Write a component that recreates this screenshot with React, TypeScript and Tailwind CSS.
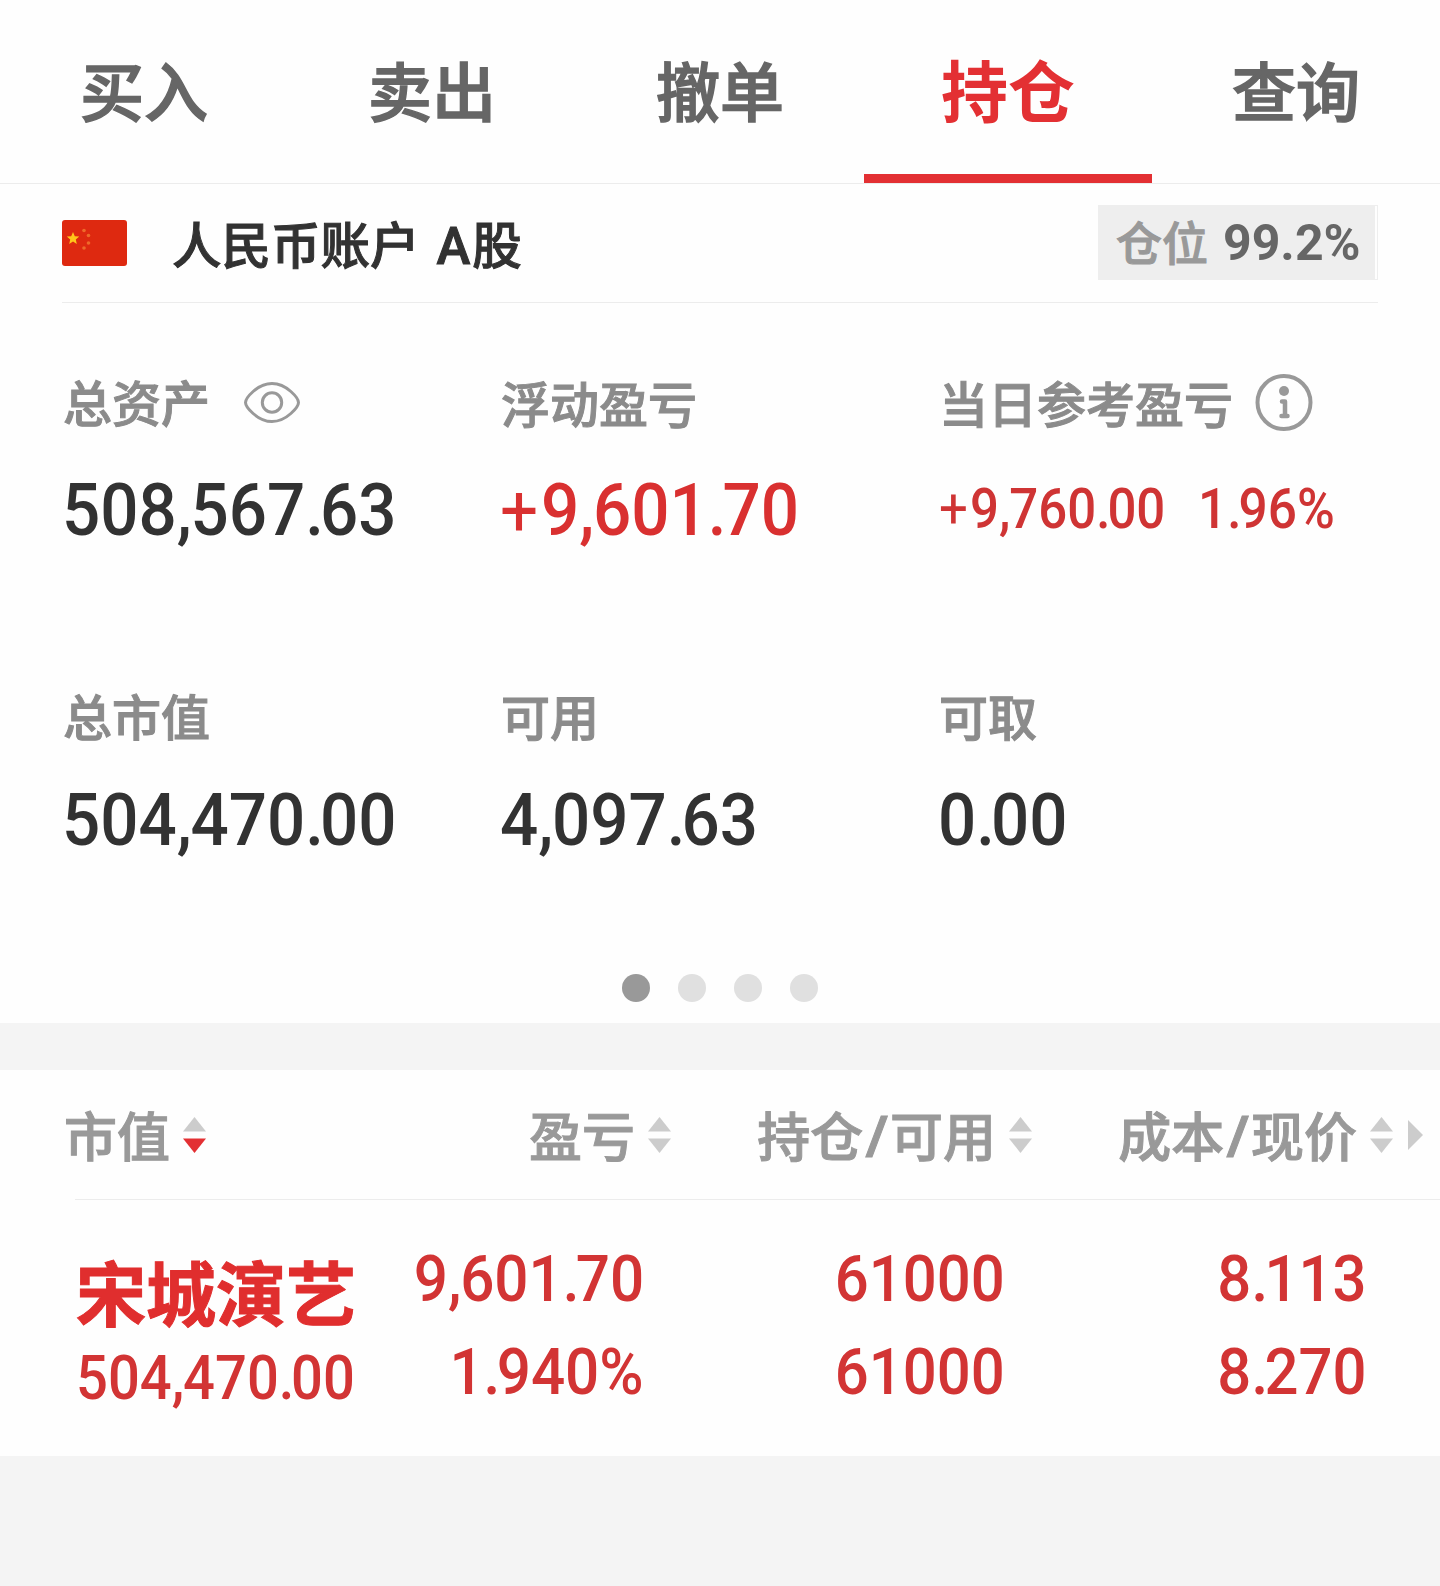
import React from 'react';
import clsx from 'clsx';

interface Column {
  label: string;
  sort?: 'desc';
  className: string;
}

const tabs = ['买入', '卖出', '撤单', '持仓', '查询'];

const columns: Column[] = [
  { label: '市值', sort: 'desc', className: 'w-[206px]' },
  { label: '盈亏', className: 'w-[465px]' },
  { label: '持仓/可用', className: 'w-[361px]' },
  { label: '成本/现价', className: 'w-[361px]' },
];

// Punctuation is set tighter than the digits around it
const markClasses: Record<string, string> = {
  '.': 'tracking-[-0.06em]',
  ',': 'tracking-[-0.02em]',
  '+': 'font-normal tracking-[0.04em]',
};

const Num: React.FC<{ value: string; className?: string }> = ({ value, className }) => (
  <span
    className={clsx(
      'block w-fit whitespace-nowrap font-[Roboto,sans-serif] font-medium [-webkit-text-stroke:0px]',
      className
    )}
  >
    {value.split(/([.,+])/).map((part, i) => (
      <span key={i} className={markClasses[part]}>{part}</span>
    ))}
  </span>
);

const Flag = () => (
  <svg width="66" height="48" viewBox="0 0 66 48">
    <rect x="0" y="1" width="65" height="46" rx="3" fill="#de2910" />
    <path d="M11 13l1.8 4.2 4.4.4-3.4 3 1 4.4-3.8-2.4-3.8 2.4 1-4.4-3.4-3 4.4-.4z" fill="#ffc61a" />
    <g fill="#ee6a2a">
      <circle cx="22" cy="11.5" r="1.8" />
      <circle cx="26.5" cy="16.5" r="1.8" />
      <circle cx="26.5" cy="24" r="1.8" />
      <circle cx="22" cy="29" r="1.8" />
    </g>
  </svg>
);

const EyeIcon = () => (
  <svg width="58" height="44" viewBox="0 0 58 44" fill="none" stroke="#999" strokeWidth="3">
    <path d="M2.5 22.5C2.5 18.5 14 3.500 29 3.500s26.5 15 26.5 19S44 41.500 29 41.500 2.500 26.500 2.500 22.500z" />
    <circle cx="29" cy="22.5" r="9.7" />
  </svg>
);

const InfoIcon = () => (
  <svg width="58" height="58" viewBox="0 0 58 58" fill="none" stroke="#999">
    <circle cx="29" cy="29.5" r="26.5" strokeWidth="4" />
    <circle cx="29" cy="18" r="5" fill="#999" stroke="none" />
    <path d="M27 28.5h3v14.5M26.5 43h6" strokeWidth="4.5" strokeLinecap="round" strokeLinejoin="round" />
  </svg>
);

const SortIcon: React.FC<{ sort?: 'desc' }> = ({ sort }) => (
  <svg width="23" height="36" viewBox="0 0 23 36">
    <path d="M11.5 0L23 14.5H0z" fill="#ccc" />
    <path d="M11.5 36L23 21.5H0z" fill={sort === 'desc' ? '#e33033' : '#ccc'} />
  </svg>
);

const ColumnLabel: React.FC<{ label: string }> = ({ label }) => {
  const [first, second] = label.split('/');
  return (
    <span className="pb-[2px] text-[53px] leading-[80px] whitespace-nowrap text-[#999]">
      {first}
      {second && (
        <>
          <span className="mx-[2px] font-['Open_Sans',sans-serif] text-[58px] leading-[1px] font-semibold [-webkit-text-stroke:1px]">/</span>
          {second}
        </>
      )}
    </span>
  );
};

const Stat: React.FC<{ label: string; value: string; red?: boolean; icon?: React.ReactNode; raised?: boolean }> = ({
  label,
  value,
  red,
  icon,
  raised,
}) => (
  <div>
    <div className="flex h-[60px] items-center text-[49px] leading-[60px] text-[#8b8b8b]">
      <span className={clsx('pl-px', icon && 'pb-[3px]')}>{label}</span>
      {icon}
    </div>
    <div className={clsx('h-[88px] text-[73px] leading-[88px]', raised ? 'mt-[31px]' : 'mt-[34px]')}>
      <Num
        value={value}
        className={clsx('origin-left', red ? 'scale-x-[0.923] text-[#d93030]' : 'scale-x-[0.922] text-[#323232]')}
      />
    </div>
  </div>
);

const App: React.FC = () => {
  return (
    <div className="h-[1586px] w-[1440px] overflow-hidden bg-[#f4f4f4] font-['Noto_Sans_CJK_SC',sans-serif] font-medium [-webkit-text-stroke:1px]">
      {/* Tabs */}
      <nav className="flex h-[184px] border-b border-[#ececec] bg-[#fefefe]">
        {tabs.map((tab) => (
          <div
            key={tab}
            className={clsx(
              'flex h-[183px] w-[288px] justify-center border-b-[9px] pt-[40px] leading-[96px]',
              tab === '持仓'
                ? 'border-[#e33033] text-[67px] font-bold text-[#e33033] [-webkit-text-stroke:0px]'
                : 'border-transparent text-[64px] text-[#666] [-webkit-text-stroke:1.5px]'
            )}
          >
            {tab}
          </div>
        ))}
      </nav>

      {/* Account summary */}
      <section className="h-[839px] bg-[#fefefe] px-[62px]">
        <div className="flex h-[119px] items-center border-b border-[#ececec] pb-px">
          <Flag />
          <span className="ml-[44px] text-[49.5px] leading-[72px] text-[#323232]">
            人民币账户<span className="mr-[2px] ml-[17px] font-[Roboto,sans-serif] text-[51px] leading-[1px] font-medium">A</span>股
          </span>
          <div className="mb-px ml-auto flex h-[75px] w-[280px] border border-[#eee] bg-[#fefefe] pr-[2px]">
            <div className="flex flex-1 items-center bg-[#eee] pl-[17px] text-[46px] leading-[72px] text-[#999]">
              <span className="pb-[4px]">仓位</span>
              <span className="ml-[15px] pt-[2px] font-[Roboto,sans-serif] text-[50px] font-bold text-[#666] [-webkit-text-stroke:0px]">
                99.2%
              </span>
            </div>
          </div>
        </div>

        <div className="grid h-[382px] grid-cols-[438px_438px_440px] pt-[69px]">
          <Stat
            label="总资产"
            value="508,567.63"
            icon={<span className="ml-[33px]"><EyeIcon /></span>}
          />
          <Stat label="浮动盈亏" value="+9,601.70" red />
          <div>
            <div className="flex h-[60px] items-center text-[49px] leading-[60px] text-[#8b8b8b]">
              <span className="pl-px">当日参考盈亏</span>
              <span className="ml-[22px]"><InfoIcon /></span>
            </div>
            <div className="mt-[33px] flex h-[88px] text-[55px] leading-[88px] text-[#cf3434]">
              <div className="w-[260px] pl-px"><Num value="+9,760.00" className="origin-left scale-x-[0.927]" /></div>
              <Num value="1.96%" className="origin-left scale-x-[0.935]" />
            </div>
          </div>
        </div>

        <div className="grid h-[239px] grid-cols-[438px_438px_440px]">
          <Stat label="总市值" value="504,470.00" raised />
          <Stat label="可用" value="4,097.63" raised />
          <Stat label="可取" value="0.00" raised />
        </div>

        <div className="mt-[50px] flex justify-center gap-7">
          <i className="size-7 rounded-full bg-[#999]" />
          <i className="size-7 rounded-full bg-[#e0e0e0]" />
          <i className="size-7 rounded-full bg-[#e0e0e0]" />
          <i className="size-7 rounded-full bg-[#e0e0e0]" />
        </div>
      </section>

      {/* Positions */}
      <section className="mt-[47px] h-[386px] bg-[#fefefe]">
        <div className="flex h-[129px] items-center">
          {columns.map((col) => (
            <div key={col.label} className={clsx('flex items-center justify-end gap-[13px]', col.className)}>
              <ColumnLabel label={col.label} />
              <SortIcon sort={col.sort} />
            </div>
          ))}
          <svg className="ml-[15px]" width="15" height="30" viewBox="0 0 15 30">
            <path d="M0 0L15 15L0 30z" fill="#ccc" />
          </svg>
        </div>
        <div className="ml-[75px] border-t border-[#ececec]" />
        <div className="flex pt-[33px] text-[64px] leading-[93px] text-[#d23434]">
          <div className="w-[360px] pl-[76px]">
            <div className="mt-[12px] h-[97px] text-[70px] leading-[92px] font-bold whitespace-nowrap text-[#e02e2e]">宋城演艺</div>
            <Num value="504,470.00" className="origin-left scale-x-[0.92] text-[61px] leading-[72px]" />
          </div>
          <div className="flex w-[284px] flex-col items-end">
            <Num value="9,601.70" className="origin-right scale-x-[0.94]" />
            <Num value="1.940%" className="origin-right scale-x-[0.94]" />
          </div>
          <div className="flex w-[361px] flex-col items-end">
            <Num value="61000" className="origin-right scale-x-[0.935]" />
            <Num value="61000" className="origin-right scale-x-[0.935]" />
          </div>
          <div className="flex w-[361px] flex-col items-end">
            <Num value="8.113" className="origin-right scale-x-[0.935]" />
            <Num value="8.270" className="origin-right scale-x-[0.935]" />
          </div>
        </div>
      </section>
    </div>
  );
};

export default App;
